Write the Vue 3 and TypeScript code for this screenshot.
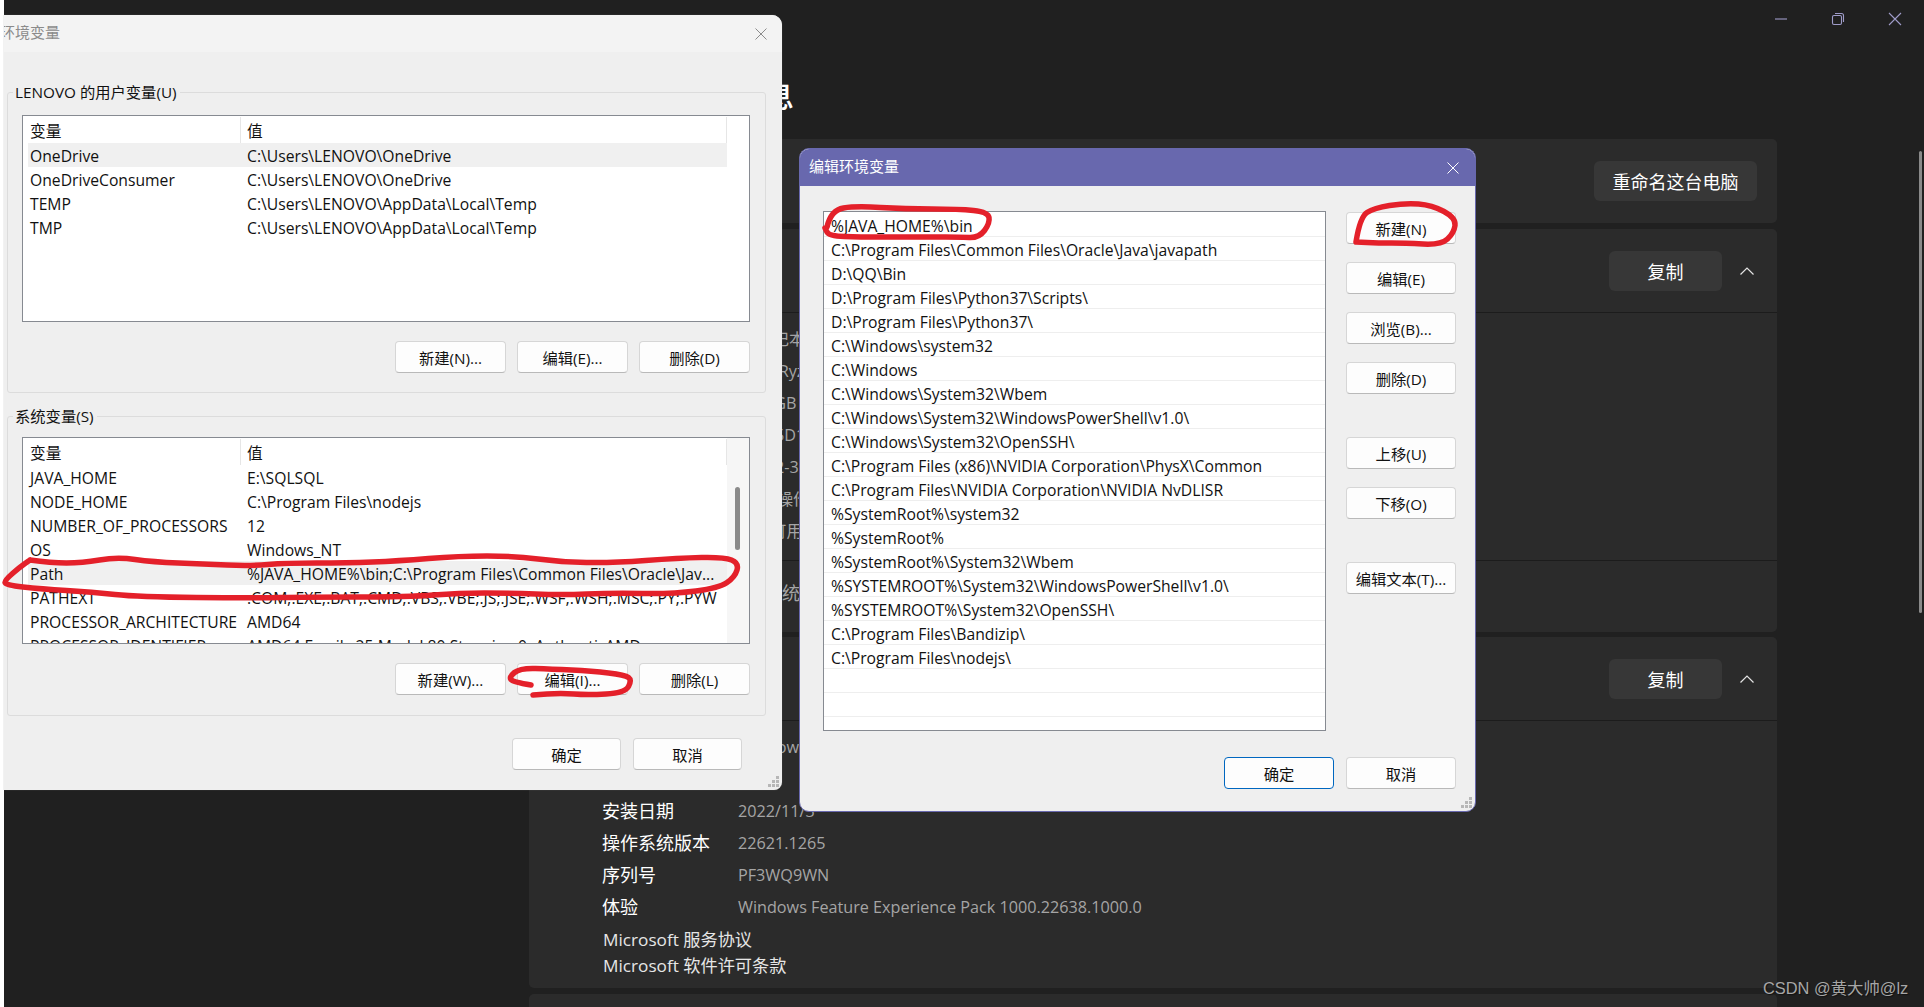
<template>
  <div class="screen">
    <!-- settings window behind the dialogs -->
    <div class="settings">
      <div class="settings__titlebar">
        <span class="win-btn">
          <svg width="14" height="14" viewBox="0 0 14 14"><path d="M1 7h12" /></svg>
        </span>
        <span class="win-btn">
          <svg width="14" height="14" viewBox="0 0 14 14">
            <rect x="1.5" y="3.5" width="9" height="9" rx="1.5" />
            <path d="M4 1.5h6.5a2 2 0 0 1 2 2V10" />
          </svg>
        </span>
        <span class="win-btn">
          <svg width="14" height="14" viewBox="0 0 14 14"><path d="M1 1l12 12M13 1L1 13" /></svg>
        </span>
      </div>
      <h1 class="settings__heading">系统信息</h1>

      <div class="settings__content">
        <section class="card card--top">
          <div class="card__head card__head--plain">
            <button class="dark-btn dark-btn--rename">重命名这台电脑</button>
          </div>
        </section>

        <section class="card card--device">
          <div class="card__head">
            <span class="card__title">设备规格</span>
            <button class="dark-btn">复制</button>
            <svg class="chevron" width="16" height="10" viewBox="0 0 16 10"><path d="M1.5 8.5L8 2l6.5 6.5" /></svg>
          </div>
          <div class="spec">
            <div v-for="row in deviceSpecs" :key="row.label" class="spec__row">
              <span class="spec__label">{{ row.label }}</span>
              <span class="spec__value">{{ row.value }}</span>
            </div>
          </div>
          <div class="related">
            <span>相关链接</span>
            <span>系统保护</span>
          </div>
        </section>

        <section class="card card--windows">
          <div class="card__head">
            <span class="card__title">Windows 规格</span>
            <button class="dark-btn">复制</button>
            <svg class="chevron" width="16" height="10" viewBox="0 0 16 10"><path d="M1.5 8.5L8 2l6.5 6.5" /></svg>
          </div>
          <div class="spec">
            <div v-for="row in windowsSpecs" :key="row.label" class="spec__row">
              <span class="spec__label">{{ row.label }}</span>
              <span class="spec__value">{{ row.value }}</span>
            </div>
          </div>
          <div class="links">
            <div>Microsoft 服务协议</div>
            <div>Microsoft 软件许可条款</div>
          </div>
        </section>

        <section class="card card--next"></section>
      </div>
    </div>
    <div class="settings-scroll"></div>

    <!-- 环境变量 -->
    <div class="dialog dialog--env">
      <div class="dialog__title dialog__title--idle">
        <span class="dialog__title-text">环境变量</span>
        <svg class="dialog__close" width="12" height="12" viewBox="0 0 12 12"><path d="M.5.5l11 11M11.5.5l-11 11" /></svg>
      </div>

      <div class="group group--user">
        <span class="group__legend">LENOVO 的用户变量(U)</span>
        <div class="var-list var-list--user">
          <div class="var-list__head">
            <span class="var-list__key">变量</span>
            <span class="var-list__val">值</span>
          </div>
          <div
            v-for="item in userVars"
            :key="item.name"
            class="var-list__row"
            :class="{ 'var-list__row--on': item.name === 'OneDrive' }"
          >
            <span class="var-list__key">{{ item.name }}</span>
            <span class="var-list__val">{{ item.value }}</span>
          </div>
        </div>
        <div class="group__actions">
          <button class="btn btn--wide">新建(N)...</button>
          <button class="btn btn--wide">编辑(E)...</button>
          <button class="btn btn--wide">删除(D)</button>
        </div>
      </div>

      <div class="group group--system">
        <span class="group__legend">系统变量(S)</span>
        <div class="var-list var-list--system">
          <div class="var-list__head">
            <span class="var-list__key">变量</span>
            <span class="var-list__val">值</span>
          </div>
          <div
            v-for="item in systemVars"
            :key="item.name"
            class="var-list__row"
            :class="{ 'var-list__row--on': item.name === 'Path' }"
          >
            <span class="var-list__key">{{ item.name }}</span>
            <span class="var-list__val">{{ item.value }}</span>
          </div>
          <div class="var-list__track"><i></i></div>
        </div>
        <div class="group__actions">
          <button class="btn btn--wide">新建(W)...</button>
          <button class="btn btn--wide">编辑(I)...</button>
          <button class="btn btn--wide">删除(L)</button>
        </div>
      </div>

      <div class="dialog__footer dialog__footer--env">
        <button class="btn btn--foot">确定</button>
        <button class="btn btn--foot">取消</button>
      </div>
      <svg class="grip" width="12" height="12" viewBox="0 0 12 12"><path d="M8 0h3v3H8zM4 4h3v3H4zM8 4h3v3H8zM0 8h3v3H0zM4 8h3v3H4zM8 8h3v3H8z" /></svg>
    </div>

    <!-- 编辑环境变量 -->
    <div class="dialog dialog--edit">
      <div class="dialog__title dialog__title--active">
        <span class="dialog__title-text dialog__title-text--edit">编辑环境变量</span>
        <svg class="dialog__close" width="12" height="12" viewBox="0 0 12 12"><path d="M.5.5l11 11M11.5.5l-11 11" /></svg>
      </div>
      <div class="edit-body">
        <div class="path-list">
          <div v-for="(line, i) in pathLines" :key="i" class="path-list__row">{{ line }}</div>
        </div>
        <div class="edit-actions">
          <button class="btn btn--side">新建(N)</button>
          <button class="btn btn--side">编辑(E)</button>
          <button class="btn btn--side">浏览(B)...</button>
          <button class="btn btn--side">删除(D)</button>
          <button class="btn btn--side edit-actions__gap">上移(U)</button>
          <button class="btn btn--side">下移(O)</button>
          <button class="btn btn--side edit-actions__gap">编辑文本(T)...</button>
        </div>
      </div>
      <div class="dialog__footer dialog__footer--edit">
        <button class="btn btn--side btn--primary">确定</button>
        <button class="btn btn--side">取消</button>
      </div>
      <svg class="grip" width="12" height="12" viewBox="0 0 12 12"><path d="M8 0h3v3H8zM4 4h3v3H4zM8 4h3v3H8zM0 8h3v3H0zM4 8h3v3H4zM8 8h3v3H8z" /></svg>
    </div>

    <!-- red marker scribbles on top of the screenshot -->
    <svg class="ink" width="1924" height="1007" viewBox="0 0 1924 1007">
      <path v-for="(d, i) in inkPaths" :key="i" :d="d" />
    </svg>

    <div class="watermark">CSDN @黄大帅@lz</div>
  </div>
</template>

<script setup lang="ts">
interface SpecRow {
  label: string;
  value: string;
}

interface EnvVar {
  name: string;
  value: string;
}

type Point = [number, number];

const deviceSpecs: SpecRow[] = [
  { label: "设备名称", value: "16笔记本" },
  { label: "处理器", value: "AMD Ryzen 5 5600H with Radeon Graphics" },
  { label: "机带 RAM", value: "16.0 GB (13.9 GB 可用)" },
  { label: "设备 ID", value: "7A3F5D10-92C4-4E1B" },
  { label: "产品 ID", value: "00342-35000-00000-AAOEM" },
  { label: "系统类型", value: "64 位操作系统, 基于 x64 的处理器" },
  { label: "笔和触控", value: "没有可用于此显示器的笔或触控输入" },
];

const windowsSpecs: SpecRow[] = [
  { label: "版本", value: "Windows 11 家庭中文版" },
  { label: "版本号", value: "22H2" },
  { label: "安装日期", value: "2022/11/3" },
  { label: "操作系统版本", value: "22621.1265" },
  { label: "序列号", value: "PF3WQ9WN" },
  { label: "体验", value: "Windows Feature Experience Pack 1000.22638.1000.0" },
];

const userVars: EnvVar[] = [
  { name: "OneDrive", value: "C:\\Users\\LENOVO\\OneDrive" },
  { name: "OneDriveConsumer", value: "C:\\Users\\LENOVO\\OneDrive" },
  { name: "TEMP", value: "C:\\Users\\LENOVO\\AppData\\Local\\Temp" },
  { name: "TMP", value: "C:\\Users\\LENOVO\\AppData\\Local\\Temp" },
];

const systemVars: EnvVar[] = [
  { name: "JAVA_HOME", value: "E:\\SQLSQL" },
  { name: "NODE_HOME", value: "C:\\Program Files\\nodejs" },
  { name: "NUMBER_OF_PROCESSORS", value: "12" },
  { name: "OS", value: "Windows_NT" },
  { name: "Path", value: "%JAVA_HOME%\\bin;C:\\Program Files\\Common Files\\Oracle\\Jav..." },
  { name: "PATHEXT", value: ".COM;.EXE;.BAT;.CMD;.VBS;.VBE;.JS;.JSE;.WSF;.WSH;.MSC;.PY;.PYW" },
  { name: "PROCESSOR_ARCHITECTURE", value: "AMD64" },
  { name: "PROCESSOR_IDENTIFIER", value: "AMD64 Family 25 Model 80 Stepping 0, AuthenticAMD" },
];

const pathLines: string[] = [
  "%JAVA_HOME%\\bin",
  "C:\\Program Files\\Common Files\\Oracle\\Java\\javapath",
  "D:\\QQ\\Bin",
  "D:\\Program Files\\Python37\\Scripts\\",
  "D:\\Program Files\\Python37\\",
  "C:\\Windows\\system32",
  "C:\\Windows",
  "C:\\Windows\\System32\\Wbem",
  "C:\\Windows\\System32\\WindowsPowerShell\\v1.0\\",
  "C:\\Windows\\System32\\OpenSSH\\",
  "C:\\Program Files (x86)\\NVIDIA Corporation\\PhysX\\Common",
  "C:\\Program Files\\NVIDIA Corporation\\NVIDIA NvDLISR",
  "%SystemRoot%\\system32",
  "%SystemRoot%",
  "%SystemRoot%\\System32\\Wbem",
  "%SYSTEMROOT%\\System32\\WindowsPowerShell\\v1.0\\",
  "%SYSTEMROOT%\\System32\\OpenSSH\\",
  "C:\\Program Files\\Bandizip\\",
  "C:\\Program Files\\nodejs\\",
  "",
  "",
];

// hand-traced marker strokes, smoothed through the midpoints
const strokes: Point[][] = [
  [
    [30, 560], [51, 563], [82, 563], [117, 557], [153, 562], [204, 564], [250, 566], [286, 563],
    [347, 563], [398, 561], [459, 556], [515, 556], [561, 562], [612, 563], [679, 558], [724, 557],
    [739, 563], [735, 577], [719, 588], [673, 594], [612, 593], [561, 595], [510, 593], [459, 593],
    [408, 597], [306, 597], [255, 598], [138, 597], [92, 592], [41, 589], [5, 585], [5, 580], [20, 567], [30, 560],
  ],
  [
    [531, 685], [513, 682], [509, 677], [520, 668], [551, 669], [592, 671], [625, 675], [632, 680],
    [625, 693], [587, 695], [561, 693], [533, 695],
  ],
  [
    [827, 227], [831, 210], [856, 206], [905, 209], [959, 209], [988, 212], [990, 223], [979, 238],
    [959, 237], [932, 237], [900, 237], [860, 237], [829, 236], [825, 228],
  ],
  [
    [1356, 242], [1360, 217], [1374, 208], [1405, 203], [1432, 205], [1456, 218], [1454, 233],
    [1441, 245], [1405, 243], [1378, 243], [1356, 242],
  ],
];

function smoothPath(points: Point[]): string {
  let d = `M${points[0][0]} ${points[0][1]}`;
  for (let i = 1; i < points.length - 1; i++) {
    const [x, y] = points[i];
    const [nx, ny] = points[i + 1];
    d += ` Q${x} ${y} ${(x + nx) / 2} ${(y + ny) / 2}`;
  }
  const last = points[points.length - 1];
  return `${d} L${last[0]} ${last[1]}`;
}

const inkPaths = strokes.map(smoothPath);
</script>

<style scoped>
.screen {
  position: relative;
  width: 1924px;
  height: 1007px;
  overflow: hidden;
  background: #fff;
  font-family: "Open Sans", "Noto Sans CJK SC", sans-serif;
}

.settings {
  height: 1007px;
  margin-left: 4px;
  overflow: hidden;
  background: #202020;
  color: #fff;
}

.settings__titlebar {
  display: flex;
  justify-content: flex-end;
  height: 38px;
  padding-right: 1px;
}

.win-btn {
  display: flex;
  align-items: center;
  justify-content: center;
  width: 57px;
}

.win-btn svg {
  fill: none;
  stroke: #9f9cc9;
  stroke-width: 1.1;
}

.settings__heading {
  height: 87px;
  margin: 0;
  padding: 14px 0 0 670px;
  font-size: 30px;
  font-weight: 500;
  line-height: 87px;
}

.settings__content {
  display: flex;
  flex-direction: column;
  width: 1248px;
  margin-left: 525px;
}

.card {
  border-radius: 5px;
  background: #2b2b2b;
}

.card--top {
  height: 84px;
}

.card--device {
  height: 403px;
  margin-top: 6px;
}

.card--windows {
  height: 351px;
  margin-top: 5px;
}

.card--next {
  height: 40px;
  margin-top: 6px;
}

.card__head {
  display: flex;
  align-items: center;
  box-sizing: border-box;
  height: 84px;
  padding: 0 15px 0 73px;
  border-bottom: 1px solid #1c1c1c;
  font-size: 18px;
}

.card__head--plain {
  padding-right: 20px;
  border-bottom: 0;
}

.card__title {
  margin-right: auto;
}

.dark-btn {
  width: 113px;
  height: 40px;
  margin-left: auto;
  border: 0;
  border-radius: 6px;
  background: #373737;
  color: #fff;
  font: inherit;
  font-size: 18px;
}

.dark-btn--rename {
  width: 163px;
}

.card__title + .dark-btn {
  margin-left: 0;
}

.chevron {
  margin: 0 7px 0 17px;
  fill: none;
  stroke: #e4e4e4;
  stroke-width: 1.2;
}

.spec {
  padding: 10px 0 0 73px;
}

.spec__row {
  display: flex;
  height: 32px;
  font-size: 18px;
  line-height: 32px;
}

.spec__label {
  width: 136px;
  flex: none;
}

.spec__value {
  color: #a5a5a5;
  font-size: 16.2px;
}

.related {
  display: flex;
  gap: 90px;
  height: 64px;
  margin-top: 13px;
  padding: 16px 0 0 73px;
  border-top: 1px solid #1c1c1c;
  color: #a5a5a5;
  font-size: 18px;
  line-height: 32px;
}

.links {
  margin-top: 4px;
  padding-left: 74px;
  color: #e6e6e6;
  font-size: 17.2px;
  line-height: 26px;
}

.settings-scroll {
  position: absolute;
  top: 151px;
  left: 1919px;
  width: 3px;
  height: 462px;
  border-radius: 2px;
  background: #8a8a8a;
}

.dialog {
  position: absolute;
  box-sizing: border-box;
  overflow: hidden;
  background: #efefef;
  color: #111;
  font-size: 15.7px;
}

.dialog--env {
  top: 15px;
  left: 4px;
  width: 778px;
  height: 775px;
  border-radius: 0 10px 8px 0;
  box-shadow: 0 0 1px #777;
}

.dialog--edit {
  top: 148px;
  left: 799px;
  width: 677px;
  height: 664px;
  border: 1px solid #6868ae;
  border-radius: 10px;
}

.dialog__title {
  display: flex;
  align-items: center;
  justify-content: space-between;
  font-size: 15px;
}

.dialog__title--idle {
  height: 37px;
  margin-bottom: 40px;
  padding-right: 15px;
  background: #f3f3f3;
  color: #8b8b8b;
}

.dialog__title-text {
  margin: 0 0 4px -4px;
}

.dialog__title-text--edit {
  margin-left: 0;
}

.dialog__title--active {
  height: 37px;
  padding: 0 16px 0 9px;
  background: #6868ae;
  color: #fff;
}

.dialog__close {
  fill: none;
  stroke: currentColor;
  stroke-width: 1;
}

.group {
  position: relative;
  box-sizing: border-box;
  width: 759px;
  margin-left: 3px;
  border: 1px solid #dcdcdc;
  border-radius: 3px;
}

.group--user {
  height: 301px;
  padding-top: 22px;
}

.group--system {
  height: 300px;
  margin-top: 23px;
  padding-top: 20px;
}

.group__legend {
  position: absolute;
  top: -11px;
  left: 5px;
  padding: 0 3px 0 2px;
  background: #efefef;
  font-size: 15.3px;
  line-height: 20px;
}

.group__actions {
  display: flex;
  justify-content: flex-end;
  gap: 11px;
  margin-top: 19px;
  padding-right: 15px;
}

.var-list {
  position: relative;
  box-sizing: border-box;
  width: 728px;
  height: 207px;
  margin-left: 14px;
  padding: 1px 0 0 5px;
  overflow: hidden;
  border: 1px solid #868a91;
  background: #fff;
}

.var-list__head,
.var-list__row {
  display: flex;
  width: 699px;
  white-space: nowrap;
}

.var-list__head {
  height: 26px;
  line-height: 28px;
}

.var-list__row {
  height: 24px;
  line-height: 26px;
}

.var-list__row--on {
  background: #f0f0f0;
}

.var-list__key {
  box-sizing: border-box;
  width: 212px;
  flex: none;
  padding-left: 2px;
}

.var-list__val {
  padding-left: 7px;
}

.var-list__head .var-list__val {
  flex: 1;
  border-left: 1px solid #e6e6e6;
  border-right: 1px solid #e6e6e6;
  padding-left: 6px;
}

.var-list__track {
  position: absolute;
  top: 0;
  right: 0;
  bottom: 0;
  width: 22px;
  background: #f6f6f6;
}

.var-list__track i {
  position: absolute;
  top: 49px;
  left: 8px;
  width: 5px;
  height: 63px;
  border-radius: 3px;
  background: #8a8a8a;
}

.btn {
  box-sizing: border-box;
  height: 32px;
  padding: 0;
  border: 1px solid #d6d6d6;
  border-bottom-color: #b9b9b9;
  border-radius: 4px;
  background: #fdfdfd;
  color: #111;
  font: inherit;
  font-size: 15.3px;
}

.btn--wide {
  width: 111px;
}

.btn--foot {
  width: 109px;
}

.btn--side {
  width: 110px;
}

.btn--primary {
  border: 1px solid #0067c0;
}

.dialog__footer {
  display: flex;
  justify-content: flex-end;
  gap: 12px;
}

.dialog__footer--env {
  margin-top: 22px;
  padding-right: 40px;
}

.dialog__footer--edit {
  margin-top: 26px;
  padding-right: 19px;
}

.edit-body {
  display: flex;
  gap: 20px;
  padding: 25px 19px 0 23px;
}

.path-list {
  box-sizing: border-box;
  width: 503px;
  height: 520px;
  padding-top: 1px;
  overflow: hidden;
  border: 1px solid #868a91;
  background: #fff;
}

.path-list__row {
  box-sizing: border-box;
  height: 24px;
  padding-left: 7px;
  border-bottom: 1px solid #eeeeee;
  line-height: 26px;
  white-space: nowrap;
}

.edit-actions {
  display: flex;
  flex-direction: column;
  gap: 18px;
  padding-top: 1px;
}

.edit-actions__gap {
  margin-top: 25px;
}

.grip {
  position: absolute;
  right: 2px;
  bottom: 2px;
  fill: #b7b7b7;
}

.ink {
  position: absolute;
  top: 0;
  left: 0;
  fill: none;
  stroke: #e4202a;
  stroke-width: 5.5;
  stroke-linecap: round;
  stroke-linejoin: round;
}

.watermark {
  position: absolute;
  top: 978px;
  left: 1763px;
  color: #a6a6a6;
  font-family: "Liberation Sans", "Noto Sans CJK SC", sans-serif;
  font-size: 16.4px;
  line-height: 20px;
  text-shadow: 1px 1px 1px #111;
  white-space: nowrap;
}
</style>
